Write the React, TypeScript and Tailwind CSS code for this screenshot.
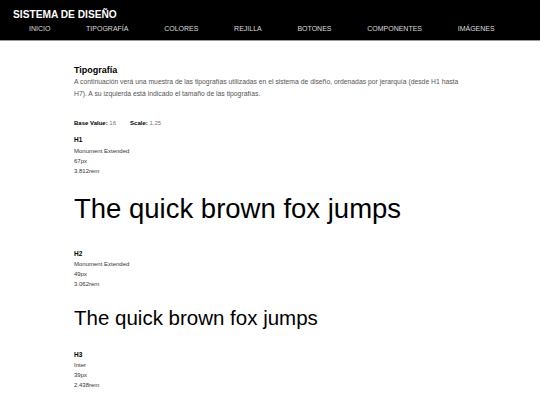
const NAV = ['INICIO', 'TIPOGRAFÍA', 'COLORES', 'REJILLA', 'BOTONES', 'COMPONENTES', 'IMÁGENES']

const SAMPLES = [
  { tag: 'H1', family: 'Monument Extended', px: '67px', rem: '3.812rem', top: 'mt-[7.5px]', meta: 'mt-[1.5px]', size: 'text-[27.5px]', gap: 'mt-[19px]' },
  { tag: 'H2', family: 'Monument Extended', px: '49px', rem: '3.062rem', top: 'mt-[26px]', meta: 'mt-[0.5px]', size: 'text-[20.5px]', gap: 'mt-[19px]' },
  { tag: 'H3', family: 'Inter', px: '39px', rem: '2.438rem', top: 'mt-[21px]', meta: 'mt-0', size: '', gap: '' },
]

function Header() {
  return (
    <header className="h-[41px] border-b border-[#9a9a9a] bg-black">
      <div className="pl-[13px] pt-[9px] text-[10.2px] font-bold leading-[12px] text-white">SISTEMA DE DISEÑO</div>
      <nav className="mt-[3px] flex gap-[35.7px] pl-[29px]">
        {NAV.map((n) => (
          <span key={n} className="text-[7px] leading-[9px] text-[#dcdcdc]">{n}</span>
        ))}
      </nav>
    </header>
  )
}

export default function App() {
  return (
    <div className="min-h-[405px] bg-white font-['Liberation_Sans',Arial,sans-serif] text-black">
      <Header />
      <main className="px-[74px]">
        <h2 className="mt-[25px] text-[9px] font-bold leading-[8px]">Tipografía</h2>
        <p className="mt-[1.5px] text-[6.8px] leading-[12px] text-[#555]">
          A continuación verá una muestra de las tipografías utilizadas en el sistema de diseño, ordenadas por jerarquía (desde H1 hasta H7). A su izquierda está indicado el tamaño de las tipografías.
        </p>

        <div className="mt-[19.5px] flex gap-[14px] text-[6px] leading-[8px]">
          <span><b>Base Value:</b> <span className="text-[#777]">16</span></span>
          <span><b>Scale:</b> <span className="text-[#777]">1.25</span></span>
        </div>

        {SAMPLES.map((s) => (
          <section key={s.tag} className={s.top}>
            <div className="text-[6.5px] font-bold leading-[10px]">{s.tag}</div>
            <div className={`${s.meta} text-[6px] leading-[10px] text-[#333]`}>
              <div>{s.family}</div>
              <div>{s.px}</div>
              <div>{s.rem}</div>
            </div>
            {s.size && (
              <div className={`${s.gap} ${s.size} leading-none`}>The quick brown fox jumps</div>
            )}
          </section>
        ))}
      </main>
    </div>
  )
}
